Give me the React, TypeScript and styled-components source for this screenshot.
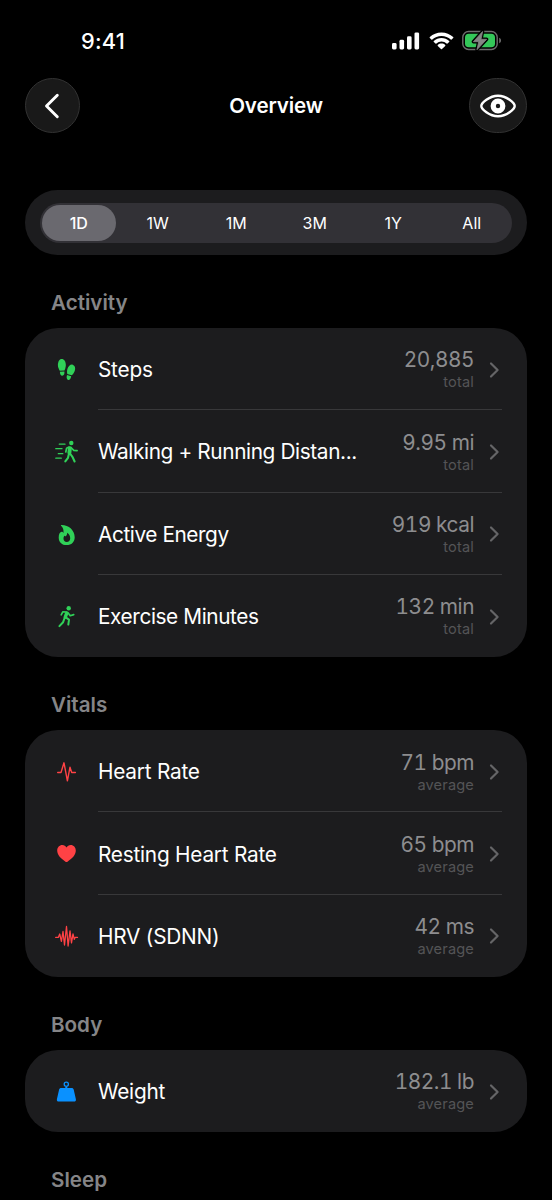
import React from "react";
import styled, { createGlobalStyle } from "styled-components";

const GlobalStyle = createGlobalStyle`
  *, *::before, *::after { box-sizing: border-box; }
  body {
    margin: 0;
    background: #000;
    color: #fff;
    font-family: Inter, "Liberation Sans", sans-serif;
    -webkit-font-smoothing: antialiased;
  }
  button { font: inherit; color: inherit; border: 0; padding: 0; background: none; }
`;

const Screen = styled.main`
  width: 552px;
  height: 1200px;
  overflow: hidden;
  background: #000;
  padding: 0 25px;
`;

const StatusBar = styled.div`
  display: flex;
  align-items: center;
  justify-content: space-between;
  height: 78px;
  padding: 4px 25px 0 56px;
`;

const Clock = styled.time`
  font-size: 21.8px;
  font-weight: 540;
  letter-spacing: 0.2px;
`;

const StatusIcons = styled.div`
  display: flex;
  align-items: center;
  gap: 8.5px;
`;

const NavBar = styled.header`
  display: grid;
  grid-template-columns: 58px 1fr 58px;
  align-items: center;
  height: 55px;
`;

const RoundButton = styled.button<{ $width: number }>`
  display: flex;
  align-items: center;
  justify-content: center;
  width: ${(p) => p.$width}px;
  height: 55px;
  border-radius: 28px;
  border: 1px solid #323232;
  background: #191919;
`;

const Title = styled.h1`
  margin: 0;
  text-align: center;
  font-size: 20.6px;
  font-weight: 560;
  letter-spacing: -0.15px;
`;

const RangePanel = styled.div`
  margin-top: 57px;
  height: 65px;
  padding: 13px 15px 12px;
  border-radius: 33px;
  background: #1c1c1e;
`;

const RangeTrack = styled.div`
  display: grid;
  grid-template-columns: repeat(6, 1fr);
  height: 40px;
  padding: 2px 1px 2px 0;
  border-radius: 20px;
  background: #323136;
`;

const RangeOption = styled.button<{ $active: boolean }>`
  display: flex;
  align-items: center;
  justify-content: center;
  margin: ${(p) => (p.$active ? "0 3px 0 2px" : "0")};
  border-radius: 18px;
  background: ${(p) => (p.$active ? "#6a696f" : "transparent")};
  font-size: 16px;
  font-weight: ${(p) => (p.$active ? 500 : 400)};
  letter-spacing: 0;
`;

const SectionTitle = styled.h2`
  display: flex;
  align-items: center;
  height: 51px;
  margin: 22px 0 0 26px;
  font-size: 20.6px;
  line-height: 26px;
  font-weight: 560;
  letter-spacing: 0;
  color: #858587;
`;

const Card = styled.ul`
  margin: 0;
  padding: 0;
  list-style: none;
  border-radius: 33px;
  background: #1c1c1e;
`;

const Row = styled.li`
  display: grid;
  grid-template-columns: 73px 1fr;
  height: 82.3px;
`;

const IconCell = styled.div`
  display: flex;
  align-items: center;
  padding: 1.6px 0 0 25px;
`;

const RowBody = styled.div`
  display: flex;
  align-items: center;
  margin-right: 25px;
  border-bottom: 1.5px solid #38383a;

  ${Row}:last-child & { border-bottom-color: transparent; }
`;

const Label = styled.span<{ $tracking: number }>`
  flex: 1;
  min-width: 0;
  padding-top: 2px;
  font-size: 20.8px;
  letter-spacing: ${(p) => p.$tracking}px;
  white-space: nowrap;
`;

const Reading = styled.div`
  display: flex;
  flex-direction: column;
  align-items: flex-end;
  margin-right: 14px;
  padding-top: 2.5px;
`;

const Value = styled.span`
  font-size: 20.8px;
  line-height: 26px;
  letter-spacing: -0.45px;
  font-variant-numeric: tabular-nums;
  color: #8d8d8f;
`;

const Caption = styled.span`
  font-size: 14.6px;
  line-height: 19px;
  letter-spacing: 0.15px;
  color: #545456;
`;

const Glyph = ({ color, children }: { color: string; children: React.ReactNode }) => (
  <svg width="32" height="32" viewBox="0 0 32 32" fill="none" stroke={color} strokeWidth="1.8" strokeLinecap="round" strokeLinejoin="round">
    {children}
  </svg>
);

const GREEN = "#30d158";
const RED = "#ff4245";
const BLUE = "#0a91ff";

const StepsIcon = (
  <Glyph color={GREEN}>
    <g fill={GREEN} stroke="none">
      <path d="M11.7 5c2.500 0 4.100 2.600 4.100 6 0 2.100-.6 3.900-1.300 5.500l-4.700.2C8.800 15.100 7.900 13.300 7.900 11c0-3.400 1.500-6 3.800-6Z" />
      <path d="M9.900 17.800l4.500-.2c.3 2.300-.5 4-2.100 4.100-1.600 0-2.500-1.500-2.400-3.900Z" />
      <path d="M22.700 10.700c2.300.7 3.100 3.500 2 6.300-.7 1.900-1.700 3.200-3 4.300l-4.400-1.300c-.4-1.700-.4-3.400.2-5.200 1-3 3.100-4.700 5.200-4.100Z" />
      <path d="M17 21.100l4.200 1.200c-.4 2.400-1.600 4-3.100 3.600-1.500-.4-1.800-2.500-1.100-4.800Z" />
    </g>
  </Glyph>
);

const WalkIcon = (
  <Glyph color={GREEN}>
    <circle cx="21.3" cy="7" r="2.2" fill={GREEN} stroke="none" />
    <path strokeWidth="1.3" d="M9.300 8.200H15M5.800 12.700h6.200M8.300 17.700h4.500M5.800 22.200h5.500" />
    <path strokeWidth="3.900" d="M19.900 12.200 19.400 16.800" />
    <path strokeWidth="1.700" d="M19 11.100 16.600 12.300 15.800 16M21 11.500l2.800 2.800 3.300.3" />
    <path strokeWidth="2.100" d="m20 17.500 2.600 3.600 2 4.400M18.900 18 18 21.800l-2.700 3.600" />
  </Glyph>
);

const FlameIcon = (
  <Glyph color={GREEN}>
    <path
      fill={GREEN}
      stroke="none"
      fillRule="evenodd"
      d="M11.300 5.900C18.900 5.800 24.700 11.300 24.700 18.200c0 4.800-3.300 7.900-8 7.900-4.800 0-8-3.100-8-7.700 0-3.300 1.400-5.600 2.900-5.600.9 0 1.300.5 1.900 1.100.2-3.400-.4-5-2.400-7.100-.3-.4-.2-.9.200-.9ZM17.100 13.800c.2 2-.6 2.900-1.500 3.800-.3-.6-.6-.8-1-.8-.8.600-1.100 1.600-1.100 2.700 0 2.100 1.300 3.400 3.200 3.400 2.100 0 3.500-1.400 3.500-3.700 0-2.200-1.200-4.400-3.100-5.400Z"
    />
  </Glyph>
);

const RunIcon = (
  <Glyph color={GREEN}>
    <circle cx="18.700" cy="7.200" r="2.200" fill={GREEN} stroke="none" />
    <path strokeWidth="3.500" d="M16.700 12.300 15.300 16" />
    <path strokeWidth="1.700" d="M17 11 12.800 10.800 11.200 13.800M18 11.800l2.200 2.900 3.500-1.100" />
    <path strokeWidth="2" d="M15.700 16.400 19 18.600l-.7 5M14.600 17l-1.500 4.200-3.700 3.900" />
  </Glyph>
);

const HeartRateIcon = (
  <Glyph color={RED}>
    <path strokeWidth="1.400" d="M7.700 16.500H11L14 6.800l3.400 18L20 11.200l1.700 5.300h3.700" />
  </Glyph>
);

const HeartIcon = (
  <Glyph color={RED}>
    <path
      fill={RED}
      stroke="none"
      d="M16.500 24.100c-.3 0-.7-.2-1-.4C10.500 20.500 7.200 16.700 7.200 12.600 7.200 9.300 9.500 7 12.300 7c1.900 0 3.300 1 4.200 2.500C17.400 8 18.900 7 20.700 7c2.900 0 5.100 2.300 5.100 5.600 0 4.100-3.300 7.900-8.300 11.100-.3.200-.7.400-1 .4Z"
    />
  </Glyph>
);

const HrvIcon = (
  <Glyph color={RED}>
    <path strokeWidth="1.300" d="M5.700 16.400H8.300L9.700 13l1.700 7.300L13 10.500l1.500 13.500L16.500 5.500 18.100 25 20 9.900l1.500 12L23 12.800l1.300 5.500.8-1.900h2.400" />
  </Glyph>
);

const WeightIcon = (
  <Glyph color={BLUE}>
    <circle cx="16.300" cy="8.300" r="2.100" strokeWidth="1.300" />
    <path strokeWidth="1.800" d="M16.300 11.300v1.200" />
    <path
      fill={BLUE}
      stroke="none"
      d="M11.300 12.100h10.200c1.200 0 2 .6 2.300 1.800l2.100 9.300c.3 1.400-.5 2.400-1.900 2.400H8.800c-1.400 0-2.200-1-1.900-2.400L9 13.900c.3-1.200 1.100-1.800 2.300-1.800Z"
    />
  </Glyph>
);

const SignalIcon = () => (
  <svg width="28" height="18" viewBox="0 0 28 18" fill="#fff">
    <rect x="0" y="11" width="4.600" height="6.500" rx="1.400" />
    <rect x="7.500" y="7.800" width="4.600" height="9.700" rx="1.400" />
    <rect x="15" y="4.300" width="4.600" height="13.200" rx="1.400" />
    <rect x="22.500" y="0.400" width="4.600" height="17.100" rx="1.400" />
  </svg>
);

const WifiIcon = () => (
  <svg width="25" height="18" viewBox="0 0 25 18" fill="#fff">
    <path d="M12.500.4c4.500 0 8.600 1.700 11.700 4.600.3.300.3.600 0 .9l-1.600 1.600c-.3.300-.6.300-.9 0A13.300 13.300 0 0 0 12.500 3.900 13.300 13.300 0 0 0 3.300 7.500c-.3.300-.6.300-.9 0L.8 5.900C.5 5.600.5 5.300.8 5A17 17 0 0 1 12.500.4Z" />
    <path d="M12.500 6c2.900 0 5.600 1.100 7.700 3 .3.300.3.600 0 .9l-1.700 1.600c-.3.300-.6.300-.9 0a7.500 7.500 0 0 0-10.200 0c-.3.300-.6.300-.9 0L4.800 9.900c-.3-.3-.3-.6 0-.9 2.100-1.900 4.800-3 7.700-3Z" />
    <path d="M12.500 11.600c1.400 0 2.700.5 3.700 1.400.3.300.3.600 0 .9l-3.200 3.200c-.3.300-.7.300-1 0l-3.200-3.200c-.3-.3-.3-.6 0-.9 1-.9 2.300-1.400 3.700-1.400Z" />
  </svg>
);

const BatteryIcon = () => (
  <svg width="40" height="22" viewBox="0 0 40 22" fill="none">
    <rect x="0.800" y="1.500" width="34.400" height="18" rx="5.800" stroke="#6d6d6d" strokeWidth="1.400" />
    <path d="M37.200 7.700c1.100.4 1.800 1.500 1.800 2.800s-.7 2.400-1.800 2.800Z" fill="#6d6d6d" />
    <rect x="3" y="3.700" width="30" height="13.600" rx="3.800" fill="#34c759" />
    <path d="M20.600 1.500 11.400 11.700h5.300L15 19.700 24.600 9.300h-5.600Z" fill="#858585" stroke="#000" strokeWidth="3.400" strokeLinejoin="round" />
    <path d="M20.600 1.500 11.400 11.700h5.300L15 19.700 24.600 9.300h-5.600Z" fill="#858585" stroke="#858585" strokeWidth=".8" strokeLinejoin="round" />
  </svg>
);

const BackIcon = () => (
  <svg width="18" height="26" viewBox="0 0 18 26" fill="none" stroke="#fff" strokeWidth="2.900" strokeLinecap="round" strokeLinejoin="round">
    <path d="M13.300 2.200 2.500 13l10.800 10.800" />
  </svg>
);

const EyeIcon = () => (
  <svg width="38" height="26" viewBox="0 0 38 26" fill="none">
    <path d="M19 2.700c8.700 0 16.700 7.300 16.700 10.300S27.700 23.300 19 23.300 2.300 16 2.300 13 10.300 2.700 19 2.700Z" stroke="#fff" strokeWidth="2.400" />
    <circle cx="19" cy="13" r="4.800" stroke="#fff" strokeWidth="5.200" />
  </svg>
);

const Chevron = styled((props: { className?: string }) => (
  <svg {...props} width="14" height="18" viewBox="0 0 14 18" fill="none" stroke="#656567" strokeWidth="2.200" strokeLinecap="round" strokeLinejoin="round">
    <path d="M3 2.500 9.600 9 3 15.500" />
  </svg>
))`
  margin-top: 2px;
`;

type Metric = { icon: React.ReactNode; label: string; value: string; caption: string; tracking?: number };
type Section = { title: string; metrics: Metric[] };

const sections: Section[] = [
  {
    title: "Activity",
    metrics: [
      { icon: StepsIcon, label: "Steps", value: "20,885", caption: "total" },
      { icon: WalkIcon, label: "Walking + Running Distan...", value: "9.95 mi", caption: "total", tracking: -0.38 },
      { icon: FlameIcon, label: "Active Energy", value: "919 kcal", caption: "total", tracking: -0.42 },
      { icon: RunIcon, label: "Exercise Minutes", value: "132 min", caption: "total", tracking: -0.4 },
    ],
  },
  {
    title: "Vitals",
    metrics: [
      { icon: HeartRateIcon, label: "Heart Rate", value: "71 bpm", caption: "average" },
      { icon: HeartIcon, label: "Resting Heart Rate", value: "65 bpm", caption: "average" },
      { icon: HrvIcon, label: "HRV (SDNN)", value: "42 ms", caption: "average" },
    ],
  },
  { title: "Body", metrics: [{ icon: WeightIcon, label: "Weight", value: "182.1 lb", caption: "average" }] },
  { title: "Sleep", metrics: [] },
];

const ranges = ["1D", "1W", "1M", "3M", "1Y", "All"];

export default function App() {
  return (
    <Screen>
      <GlobalStyle />
      <StatusBar>
        <Clock>9:41</Clock>
        <StatusIcons>
          <SignalIcon />
          <WifiIcon />
          <BatteryIcon />
        </StatusIcons>
      </StatusBar>
      <NavBar>
        <RoundButton $width={55} aria-label="Back">
          <BackIcon />
        </RoundButton>
        <Title>Overview</Title>
        <RoundButton $width={58} aria-label="Visibility">
          <EyeIcon />
        </RoundButton>
      </NavBar>
      <RangePanel>
        <RangeTrack>
          {ranges.map((range, i) => (
            <RangeOption key={range} $active={i === 0}>
              {range}
            </RangeOption>
          ))}
        </RangeTrack>
      </RangePanel>
      {sections.map((section) => (
        <section key={section.title}>
          <SectionTitle>{section.title}</SectionTitle>
          <Card>
            {section.metrics.map((metric) => (
              <Row key={metric.label}>
                <IconCell>{metric.icon}</IconCell>
                <RowBody>
                  <Label $tracking={metric.tracking ?? -0.23}>{metric.label}</Label>
                  <Reading>
                    <Value>{metric.value}</Value>
                    <Caption>{metric.caption}</Caption>
                  </Reading>
                  <Chevron />
                </RowBody>
              </Row>
            ))}
          </Card>
        </section>
      ))}
    </Screen>
  );
}
